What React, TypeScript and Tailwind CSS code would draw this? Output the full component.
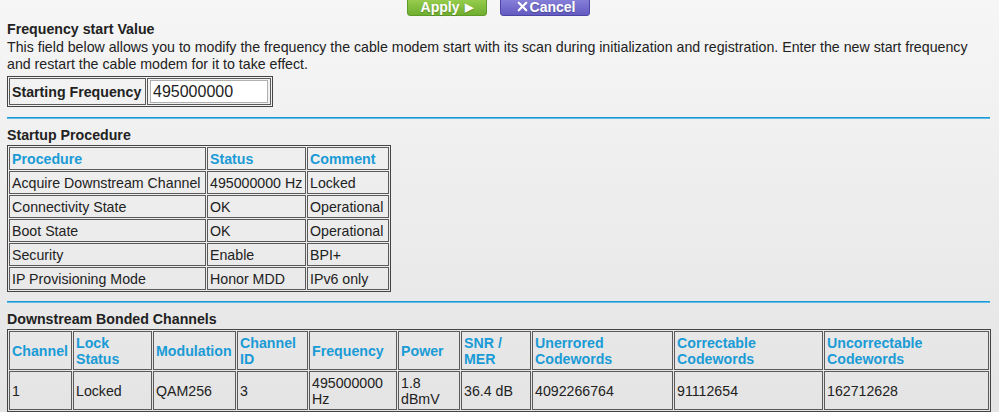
import { X } from "lucide-react";

const startup = [
  ["Acquire Downstream Channel", "495000000 Hz", "Locked"],
  ["Connectivity State", "OK", "Operational"],
  ["Boot State", "OK", "Operational"],
  ["Security", "Enable", "BPI+"],
  ["IP Provisioning Mode", "Honor MDD", "IPv6 only"],
];

const dsHeaders: { label: string; w: string }[] = [
  { label: "Channel", w: "w-[63px]" },
  { label: "Lock Status", w: "w-[79px]" },
  { label: "Modulation", w: "w-[83px]" },
  { label: "Channel ID", w: "w-[71px]" },
  { label: "Frequency", w: "w-[88px]" },
  { label: "Power", w: "w-[62px]" },
  { label: "SNR / MER", w: "w-[70px]" },
  { label: "Unerrored Codewords", w: "w-[141px]" },
  { label: "Correctable Codewords", w: "w-[149px]" },
  { label: "Uncorrectable Codewords", w: "w-[165px]" },
];

const dsRow = ["1", "Locked", "QAM256", "3", "495000000 Hz", "1.8 dBmV", "36.4 dB", "4092266764", "91112654", "162712628"];

const cell = "border border-[#5a5a5a] px-[2px] text-left align-middle";

export default function App() {
  return (
    <main
      className="w-[999px] h-[412px] overflow-hidden bg-gradient-to-b from-[#f6f6f6] to-[#e4e4e4] text-[14.2px] leading-[16px] text-[#222] pl-[7px] pr-[9px]"
      style={{ fontFamily: '"Liberation Sans", Arial, sans-serif' }}
    >
      <div className="h-[16px] flex justify-center gap-[13px]">
        <button className="-mt-[3px] h-[19px] w-[80px] rounded-[3px] border border-[#5e9a2a] bg-gradient-to-b from-[#9bd050] to-[#6fae2f] text-white font-bold text-[14px] leading-[14px] flex items-center justify-center gap-[6px] [text-shadow:0_1px_1px_rgba(0,0,0,0.25)]">
          Apply <span className="text-[11px]">▶</span>
        </button>
        <button className="-mt-[3px] h-[19px] w-[90px] rounded-[3px] border border-[#4c45a6] bg-gradient-to-b from-[#8a83dc] to-[#635bc0] text-white font-bold text-[14px] leading-[14px] flex items-center justify-center [text-shadow:0_1px_1px_rgba(0,0,0,0.25)]">
          <X size={15} strokeWidth={3.5} />
          Cancel
        </button>
      </div>

      <h2 className="mt-[5px] font-bold">Frequency start Value</h2>
      <p className="mt-[2px] leading-[17px]">
        This field below allows you to modify the frequency the cable modem start with its scan during initialization and registration. Enter the new start frequency and restart the cable modem for it to take effect.
      </p>

      <table className="mt-[3px] border border-[#444] border-separate border-spacing-[1px] table-fixed w-[266px]">
        <tbody>
          <tr>
            <td className={`${cell} w-[137px] h-[26px] font-bold`}>Starting Frequency</td>
            <td className={`${cell} w-[124px] h-[26px] p-[1px]`}>
              <input
                defaultValue="495000000"
                className="w-full h-[23px] bg-white border border-[#b0b0b0] px-[2px] text-[16px] text-[#222] outline-none"
              />
            </td>
          </tr>
        </tbody>
      </table>

      <div className="mt-[10px] h-[2px] bg-[#1a9bd6] border-b border-[#5fbbe5]" />

      <h2 className="mt-[8px] font-bold">Startup Procedure</h2>
      <table className="mt-[2px] border border-[#444] border-separate border-spacing-[1px] table-fixed w-[384px]">
        <thead>
          <tr>
            <th className={`${cell} w-[197px] h-[23px] text-[#1a9bd6] font-bold`}>Procedure</th>
            <th className={`${cell} w-[99px] h-[23px] text-[#1a9bd6] font-bold`}>Status</th>
            <th className={`${cell} w-[82px] h-[23px] text-[#1a9bd6] font-bold`}>Comment</th>
          </tr>
        </thead>
        <tbody>
          {startup.map((r) => (
            <tr key={r[0]}>
              {r.map((c, i) => (
                <td key={i} className={`${cell} h-[23px] whitespace-nowrap`}>
                  {c}
                </td>
              ))}
            </tr>
          ))}
        </tbody>
      </table>

      <div className="mt-[9px] h-[2px] bg-[#1a9bd6] border-b border-[#5fbbe5]" />

      <h2 className="mt-[8px] font-bold">Downstream Bonded Channels</h2>
      <table className="mt-[2px] border border-[#444] border-separate border-spacing-[1px] table-fixed w-[983px]">
        <thead>
          <tr>
            {dsHeaders.map((h) => (
              <th key={h.label} className={`${cell} ${h.w} h-[39px] text-[#1a9bd6] font-bold`}>
                {h.label}
              </th>
            ))}
          </tr>
        </thead>
        <tbody>
          <tr>
            {dsRow.map((c, i) => (
              <td key={i} className={`${cell} h-[39px]`}>
                {c}
              </td>
            ))}
          </tr>
        </tbody>
      </table>
    </main>
  );
}
